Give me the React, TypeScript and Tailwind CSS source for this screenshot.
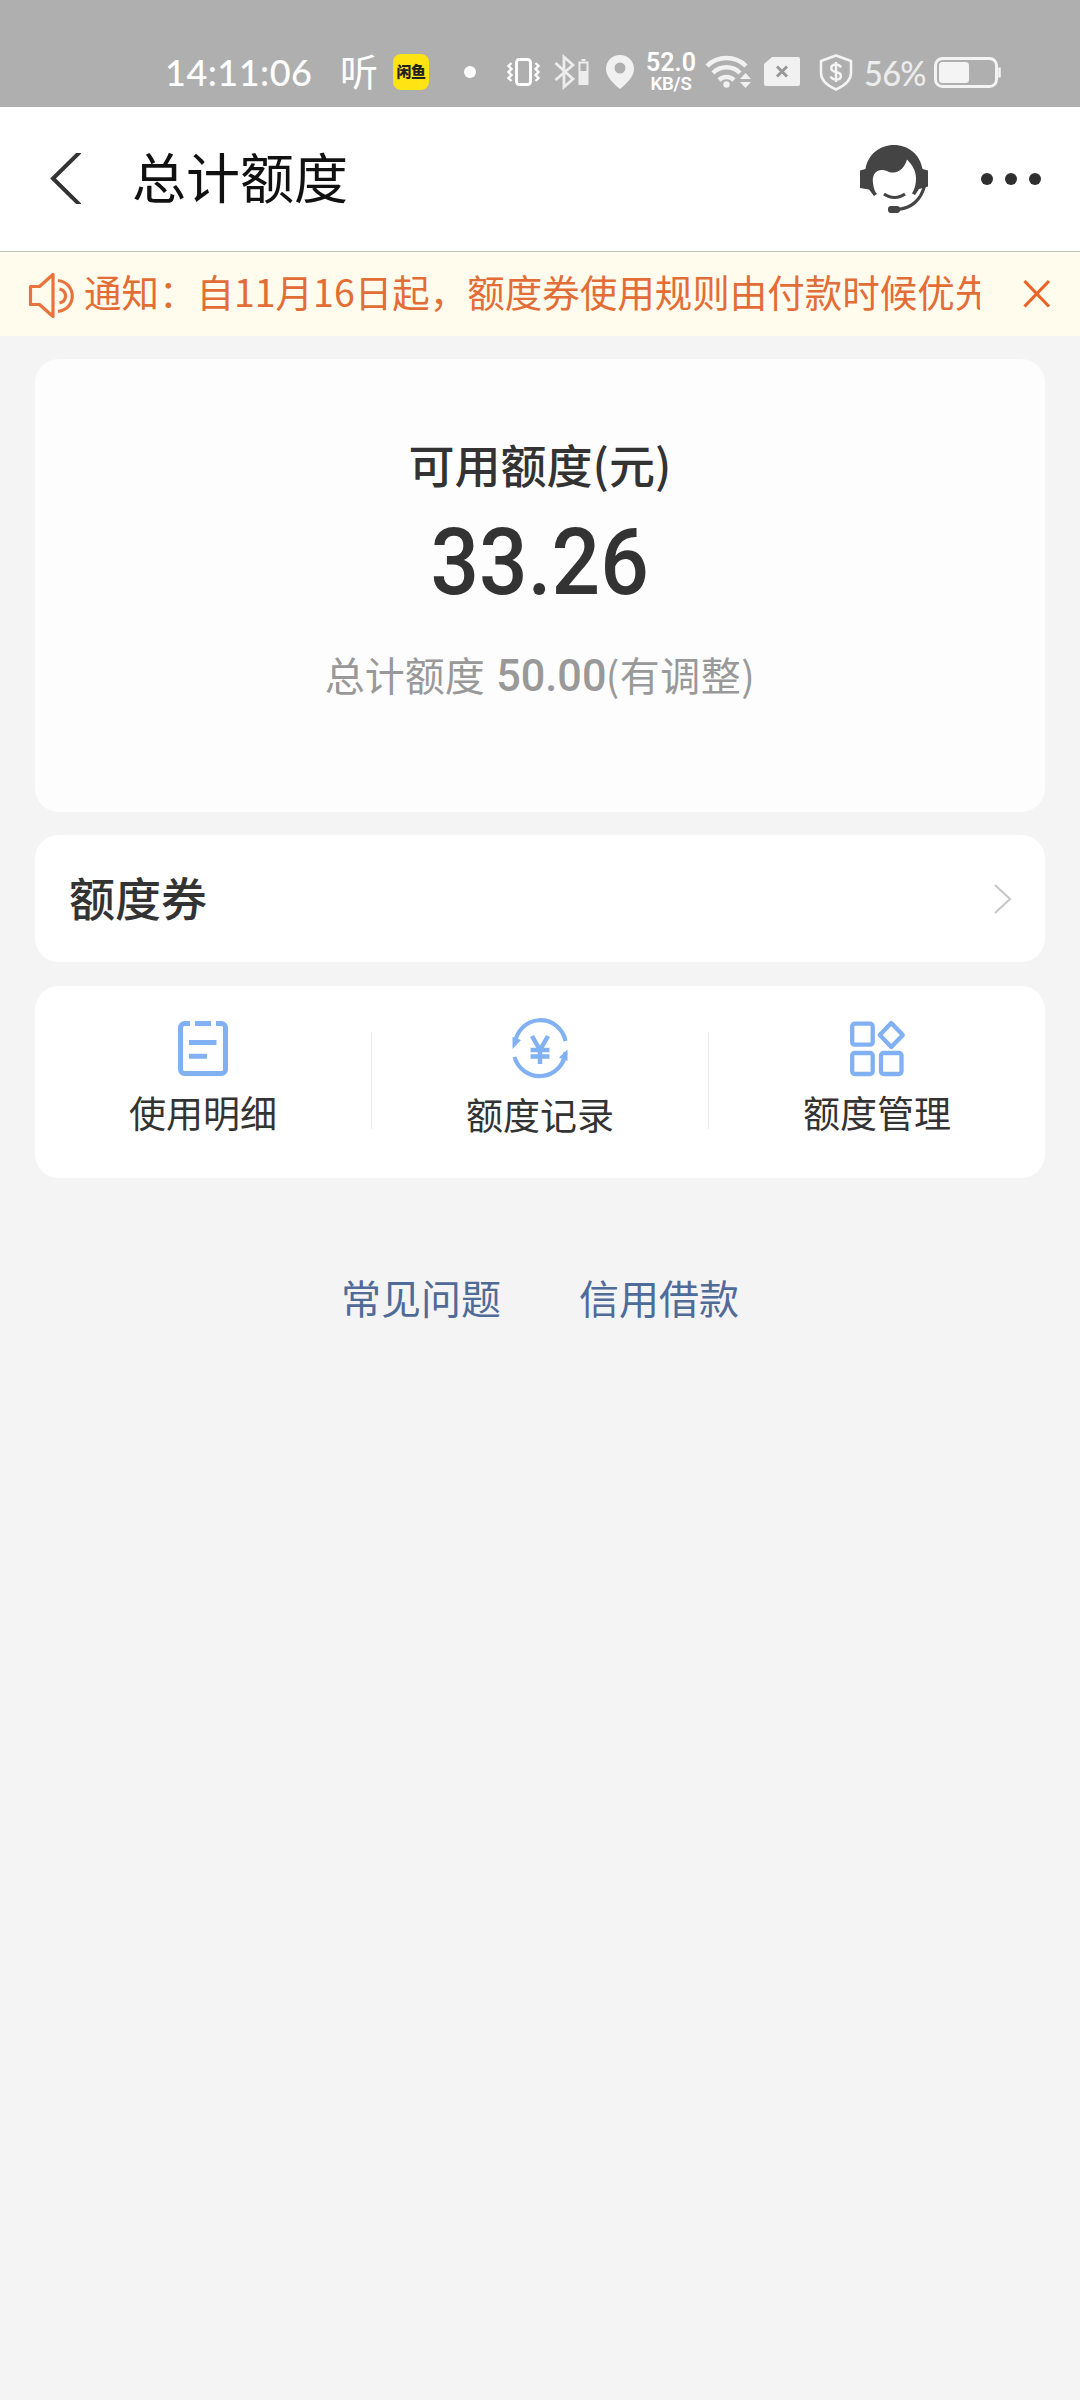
import type { ReactNode } from "react";

const ICON_BLUE = "#82b1f3";

function StatusBar() {
  return (
    <div className="flex h-[107px] items-start bg-[#afafaf] pt-[52px] text-white">
      <div className="ml-[165px] h-10 w-[151px] whitespace-nowrap font-['Lato'] text-[36px] font-medium leading-[40px] tracking-[0.5px]">
        14:11:06
      </div>
      <div className="ml-[24px] h-10 w-[38px] text-[38px] font-normal leading-[36px]">听</div>
      <div className="ml-[15px] mt-[2px] flex h-9 w-9 items-center justify-center rounded-lg bg-[#ffe312] text-[15px] font-black leading-none tracking-[-0.5px] text-[#222]">
        <span className="-mt-1">闲鱼</span>
      </div>
      <div className="ml-[35px] mt-[14px] h-3 w-3 rounded-full bg-white" />
      <svg className="ml-[30px]" width="36" height="40" viewBox="506 52 36 40" fill="none" stroke="#fff">
        <rect x="516.5" y="59.500" width="14" height="25" rx="3" strokeWidth="3" />
        <path d="M511.500 63l-3 3 3 3-3 3 3 3-3 3 3 3M535.500 63l3 3-3 3 3 3-3 3 3 3-3 3" strokeWidth="2.400" />
      </svg>
      <svg className="ml-[12px]" width="38" height="40" viewBox="554 52 38 40" fill="none" stroke="#ededed">
        <path d="M555.500 63l17.500 16-9 8V57l9 8-17.500 15" strokeWidth="2.800" />
        <path d="M579.500 62.500h8V84h-8zM581.500 60h4" strokeWidth="2" />
        <path d="M579 71h9v13h-9z" fill="#ededed" stroke="none" />
      </svg>
      <svg className="ml-[13px]" width="30" height="40" viewBox="605 52 30 40">
        <path
          fillRule="evenodd"
          fill="#f1f1f1"
          d="M620 55c-8 0-14 6-14 14 0 8 8 15 14 20 6-5 14-12 14-20 0-8-6-14-14-14zm0 7.500a5.500 5.500 0 1 1 0 11 5.500 5.500 0 0 1 0-11z"
        />
      </svg>
      <div className="ml-[8px] flex h-10 w-[56px] flex-col items-center font-['Roboto'] font-semibold">
        <span className="text-[25px] leading-[22px]">52.0</span>
        <span className="text-[18.500px] leading-[20px] tracking-[-0.2px]">KB/S</span>
      </div>
      <svg className="ml-[5px]" width="50" height="40" viewBox="704 52 50 40" fill="none" stroke="#f1f1f1" strokeWidth="4.500">
        <path d="M707 66a28 28 0 0 1 39 0M713 73a19 19 0 0 1 27 0M719 80a11 11 0 0 1 15 0" />
        <circle cx="726.500" cy="84.500" r="3.200" fill="#f1f1f1" stroke="none" />
        <path d="M740 79l5.500-6 5.500 6zM740 82l5.500 6 5.500-6z" fill="#f1f1f1" stroke="none" />
      </svg>
      <svg className="ml-[9px]" width="38" height="40" viewBox="763 52 38 40">
        <path d="M772 57h26a2 2 0 0 1 2 2v25a2 2 0 0 1-2 2h-32a2 2 0 0 1-2-2V64z" fill="#f1f1f1" />
        <path d="M777 66.500l10 10M787 66.500l-10 10" stroke="#999" strokeWidth="3" />
      </svg>
      <svg className="ml-[17px]" width="36" height="40" viewBox="818 52 36 40" fill="none" stroke="#f4f4f4">
        <path d="M836 55.500l15 5.500v12c0 8-7 13-15 16.500-8-3.500-15-8.500-15-16.500V61z" strokeWidth="2.500" strokeLinejoin="round" />
        <path d="M841 67.500c-1-2-2.500-3-5-3-6 0-6.500 6.500 0 7.500s6.500 7.500 0 7.500c-2.500 0-4.500-1-5.500-3M836 62v20" strokeWidth="2.500" />
      </svg>
      <div className="ml-[10px] h-10 w-[64px] origin-left scale-x-[0.93] whitespace-nowrap font-['Lato'] text-[35px] font-medium leading-[41px] tracking-[-0.8px] text-[#ececec]">
        56%
      </div>
      <svg className="ml-[5px]" width="70" height="40" viewBox="933 52 70 40" fill="none" stroke="#f4f4f4">
        <rect x="935.500" y="58.500" width="61" height="28" rx="7" strokeWidth="3" />
        <rect x="939" y="62" width="30" height="21" rx="3.500" fill="#f4f4f4" stroke="none" />
        <path d="M999.500 67.500v10" strokeWidth="2.500" />
      </svg>
    </div>
  );
}

function Header() {
  return (
    <header className="flex h-[145px] border-b border-[#bfc4ba] bg-white">
      <svg className="ml-[49px] mt-[46px]" width="32" height="51" viewBox="49 153 32 51" fill="none">
        <path d="M82 150L53 178.500L82 207" stroke="#333" strokeWidth="4" />
      </svg>
      <h1 className="ml-[51px] mt-[33px] w-[300px] text-[54px] leading-[72px] text-[#111]">总计额度</h1>
      <svg className="ml-[428px] mt-[38px]" width="68" height="68" viewBox="860 145 68 68" fill="none">
        <path
          d="M860 170.500l5.500-1.500C868 154 880 145 894 145s26 9 28.500 24l5.500 1.500v16l-5 1.500-4 1-4 6-3-1.500c3-5 4-10 4-15 0-8-4-14-9-19-2 7-7 13-14 13-5 0-7-3-12-2.500-6 .5-9 6-8 13 .5 5 2 9 4 11l-3 2-5-6.500-9-1.500z"
          fill="#444"
        />
        <path d="M884 194c6 4.500 15 4.500 21 0" stroke="#444" strokeWidth="3" />
        <path d="M924.500 186c-3.500 13-12 22-27 23.500" stroke="#444" strokeWidth="3" />
        <rect x="888" y="206" width="12" height="7" rx="3" fill="#444" />
      </svg>
      <div className="ml-[53px] mt-[66px] flex h-3 gap-3">
        <i className="h-3 w-3 rounded-full bg-[#2f2f2f]" />
        <i className="h-3 w-3 rounded-full bg-[#2f2f2f]" />
        <i className="h-3 w-3 rounded-full bg-[#2f2f2f]" />
      </div>
    </header>
  );
}

function Notice() {
  return (
    <div className="flex h-[84px] bg-[#fffbed] text-[#e26d36]">
      <svg className="ml-[28px] mt-[20px]" width="48" height="48" viewBox="28 272 48 48" fill="none" stroke="#e9733c" strokeWidth="3.200">
        <path d="M30.500 286.500h9L53 274.500V316.500L39.500 304.500h-9z" strokeLinejoin="round" />
        <path d="M58 280.500c19 2 19 29 0 31M59.500 289c8 2 8 12 0 14" />
      </svg>
      <div className="ml-[8px] mt-[11px] w-[896px] overflow-hidden whitespace-nowrap text-[37.5px] leading-[56px]">
        通知：自11月16日起，额度券使用规则由付款时候优先
      </div>
      <svg className="ml-[42px] mt-[27px]" width="30" height="30" viewBox="1022 279 30 30" stroke="#e96424" strokeWidth="3.200">
        <path d="M1024.500 281l24.500 25.500M1049 281l-24.500 25.500" />
      </svg>
    </div>
  );
}

function Action({ icon, label, low }: { icon: ReactNode; label: string; low?: boolean }) {
  return (
    <div className="flex flex-1 flex-col items-center pt-[32px]">
      {icon}
      <span className={low ? "mt-[7px] text-[37px] leading-[54px]" : "mt-[5px] text-[37px] leading-[54px]"}>{label}</span>
    </div>
  );
}

function DetailIcon() {
  return (
    <svg width="60" height="62" viewBox="173 1018 60 62" fill="none" stroke={ICON_BLUE} strokeWidth="5">
      <path d="M190 1023.500h-5.500a4 4 0 0 0-4 4v42a4 4 0 0 0 4 4h37a4 4 0 0 0 4-4v-42a4 4 0 0 0-4-4H216M195 1023.500h16M189 1042.500h27.500M189 1056.300h18" />
    </svg>
  );
}

function RecordIcon() {
  return (
    <svg width="60" height="62" viewBox="510.500 1018 60 62" fill="none" stroke={ICON_BLUE} strokeWidth="4.200">
      <path d="M515.500 1044a25.500 25.500 0 0 1 50.500-3M515 1057a26 26 0 0 0 51-5" />
      <path d="M513 1037v12l8.500-9zM568 1061v-11.500l-8.500 8z" fill={ICON_BLUE} stroke="none" />
      <path d="M532.500 1036l8 14 8-14M540.500 1049v15M531 1050h19M531 1056.500h19" strokeWidth="4.500" />
    </svg>
  );
}

function ManageIcon() {
  return (
    <svg width="60" height="62" viewBox="847 1018 60 62" fill="none" stroke={ICON_BLUE} strokeWidth="4.300">
      <rect x="852.200" y="1023.700" width="20.500" height="21" rx="2.500" />
      <rect x="852.200" y="1053" width="20.500" height="21" rx="2.500" />
      <rect x="881" y="1053" width="20.500" height="21" rx="2.500" />
      <path d="M891.300 1023l11.500 12-11.500 12-11.500-12z" strokeLinejoin="round" />
    </svg>
  );
}

export default function App() {
  return (
    <div className="h-[2400px] w-[1080px] overflow-hidden bg-[#f4f4f4] font-['Noto_Sans_CJK_SC',sans-serif] text-[#333]">
      <StatusBar />
      <Header />
      <Notice />
      <main className="flex flex-col px-[35px] pt-[23px]">
        <section className="flex h-[453px] flex-col items-center rounded-3xl bg-[#fdfdfd]">
          <h2 className="mt-[71px] text-[46px] font-medium leading-[66px]">可用额度(元)</h2>
          <div className="mt-[20px] scale-x-[0.92] font-['Roboto'] text-[93px] font-medium leading-[94px]">33.26</div>
          <div className="mt-[34px] flex items-baseline whitespace-nowrap text-[40px] leading-[60px] text-[#999]">
            <span>总计额度</span>
            <span className="ml-[9px] w-[112px] scale-x-[0.96] text-center font-['Roboto'] text-[45px] font-medium leading-[60px]">
              50.00
            </span>
            <span className="tracking-[0.5px]">(有调整)</span>
          </div>
        </section>
        <section className="mt-[23px] flex h-[127px] items-center rounded-3xl bg-white pl-[34px] pr-[33px]">
          <h3 className="-mt-[6px] flex-1 text-[46px] font-medium leading-[66px]">额度券</h3>
          <svg width="18" height="30" viewBox="0 0 18 30" fill="none" stroke="#c8c8c8" strokeWidth="2.200">
            <path d="M1 1l15 14L1 29" strokeLinejoin="round" />
          </svg>
        </section>
        <section className="mt-[24px] flex h-[192px] rounded-3xl bg-white">
          <Action icon={<DetailIcon />} label="使用明细" />
          <div className="mt-[46px] h-[97px] w-px bg-[#e9e9e9]" />
          <Action icon={<RecordIcon />} label="额度记录" low />
          <div className="mt-[46px] h-[97px] w-px bg-[#e9e9e9]" />
          <Action icon={<ManageIcon />} label="额度管理" />
        </section>
        <nav className="mt-[89px] flex justify-center gap-[78px] text-[40px] leading-[60px] text-[#506b98]">
          <a>常见问题</a>
          <a>信用借款</a>
        </nav>
      </main>
    </div>
  );
}
